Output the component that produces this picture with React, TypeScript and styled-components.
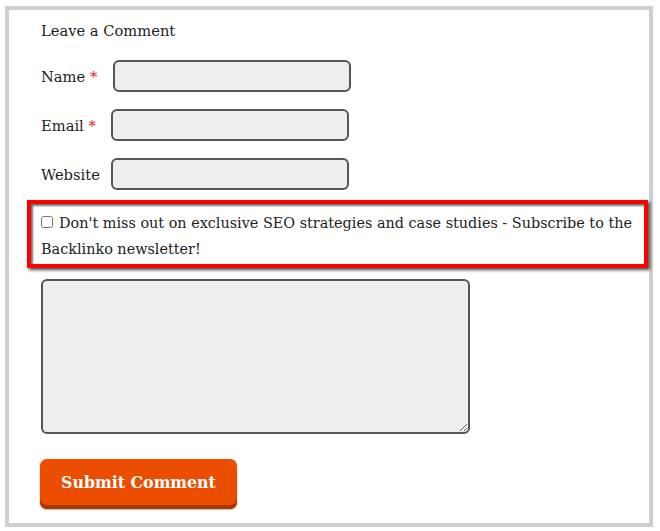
import React from "react";
import styled, { createGlobalStyle } from "styled-components";

const Global = createGlobalStyle`
  html, body { margin: 0; padding: 0; background: #ffffff; }
  body { font-family: "DejaVu Serif", "Liberation Serif", serif; color: #222; }
`;

const Page = styled.div`
  width: 660px;
  height: 531px;
  padding: 6px 7px 4px 5px;
  box-sizing: border-box;
`;

const Frame = styled.div`
  height: 100%;
  box-sizing: border-box;
  border: 4px solid #cfcfcf;
  padding: 9px 0 0 32px;
  display: flex;
  flex-direction: column;
`;

const Heading = styled.h3`
  margin: 0;
  font-weight: normal;
  font-size: 14.7px;
  line-height: 24px;
  color: #222;
`;

const Row = styled.div<{ $top: number }>`
  display: grid;
  grid-template-columns: 70px 238px;
  align-items: center;
  margin-top: ${(p) => p.$top}px;
`;

const Label = styled.label`
  font-size: 14.7px;
  color: #222;
`;

const Star = styled.span`
  color: #e8202a;
`;

const Input = styled.input<{ $shift?: number }>`
  box-sizing: border-box;
  width: 238px;
  height: 32px;
  margin-left: ${(p) => p.$shift ?? 0}px;
  background: #eeeeee;
  border: 2px solid #555;
  border-radius: 6px;
  outline: none;
`;

const Notice = styled.div`
  margin: 10px 0 0 -14px;
  width: 621px;
  box-sizing: border-box;
  border: 4px solid #ff0000;
  box-shadow: 2px 2px 3px rgba(0, 0, 0, 0.7), inset 2px 2px 2px rgba(0, 0, 0, 0.55);
  padding: 6px 0 2px 10px;
  font-size: 14.4px;
  line-height: 26px;
  color: #222;
`;

const Check = styled.input`
  width: 12px;
  height: 12px;
  margin: 0 6px 0 0;
  vertical-align: 0px;
  accent-color: #ccc;
`;

const TextArea = styled.textarea`
  margin-top: 11px;
  box-sizing: border-box;
  width: 429px;
  height: 155px;
  background: #eeeeee;
  border: 2px solid #555;
  border-radius: 6px;
  resize: both;
  outline: none;
`;

const Submit = styled.button`
  margin: 25px 0 0 -1px;
  align-self: flex-start;
  width: 197px;
  height: 50px;
  background: #eb4e00;
  border: none;
  border-radius: 7px;
  box-shadow: inset 0 -4px 0 #a83700, 0 1px 2px rgba(0, 0, 0, 0.3);
  color: #ffffff;
  font-family: "DejaVu Serif", "Liberation Serif", serif;
  font-weight: bold;
  font-size: 15.8px;
  padding: 0 0 4px;
  cursor: pointer;
`;

export default function App() {
  return (
    <Page>
      <Global />
      <Frame>
        <Heading>Leave a Comment</Heading>
        <Row $top={17}>
          <Label>
            Name <Star>*</Star>
          </Label>
          <Input $shift={2} />
        </Row>
        <Row $top={17}>
          <Label>
            Email <Star>*</Star>
          </Label>
          <Input />
        </Row>
        <Row $top={17}>
          <Label>Website</Label>
          <Input />
        </Row>
        <Notice>
          <Check type="checkbox" />
          Don't miss out on exclusive SEO strategies and case studies - Subscribe to the Backlinko newsletter!
        </Notice>
        <TextArea />
        <Submit>Submit Comment</Submit>
      </Frame>
    </Page>
  );
}
